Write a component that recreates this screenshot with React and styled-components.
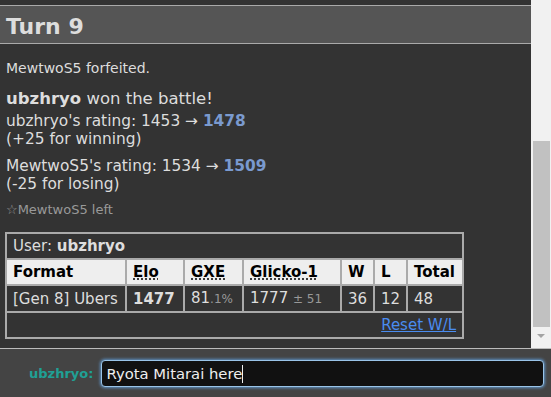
import React, { useEffect, useRef } from 'react';
import styled, { createGlobalStyle } from 'styled-components';

const GlobalStyle = createGlobalStyle`
  html, body {
    margin: 0;
    padding: 0;
    width: 100%;
    height: 100%;
    overflow: hidden;
    background: #333;
  }
  #root {
    height: 100%;
  }
`;

const Page = styled.div`
  display: flex;
  flex-direction: column;
  height: 100vh;
  font-family: "DejaVu Sans", Verdana, sans-serif;
  color: #ddd;
`;

const Main = styled.div`
  display: flex;
  height: 348px;
  flex: 0 0 348px;
`;

const Log = styled.div`
  flex: 1;
  background: #333;
  padding-top: 5px;
  overflow: hidden;
`;

const TurnHeader = styled.h2`
  margin: 0;
  padding: 8px 6px 4px;
  background: #555;
  border-top: 1px solid #aaa;
  border-bottom: 1px solid #aaa;
  font-size: 22px;
  line-height: 25px;
  font-weight: bold;
  color: #ddd;
`;

const Body = styled.div`
  padding: 0 6px;
`;

const Line = styled.div`
  margin-top: ${(p) => p.$gap || 0}px;
  font-size: ${(p) => p.$size || 15.4}px;
  line-height: ${(p) => p.$lh || 17.5}px;
  color: ${(p) => p.$color || '#ddd'};
`;

const Rating = styled.strong`
  color: #7a9acf;
`;

const RatingsTable = styled.table`
  margin: 14px 0 0 -1px;
  width: 459px;
  border-collapse: collapse;
  table-layout: fixed;
  font-size: 15px;
  line-height: 18px;
  color: #ddd;

  td, th {
    border: 2px solid #aaa;
    padding: 3px 6px 3px;
    text-align: left;
    white-space: nowrap;
    overflow: hidden;
  }
`;

const HeadCell = styled.th`
  background: #eee;
  color: #000;
  font-weight: bold;
`;

const Abbr = styled.abbr`
  text-decoration: underline dotted;
  text-underline-offset: 2px;
  cursor: help;
`;

const Small = styled.small`
  font-size: 12px;
  color: #999;
`;

const ResetCell = styled.td`
  text-align: right !important;
`;

const ResetLink = styled.a`
  color: #4a8cf0;
  text-decoration: underline;
  cursor: pointer;
`;

const Scrollbar = styled.div`
  width: 20px;
  flex: 0 0 20px;
  background: #f1f1f1;
  display: flex;
  flex-direction: column;
  align-items: center;
`;

const Thumb = styled.div`
  margin: 141px 1px 0 2px;
  align-self: stretch;
  height: 186px;
  background: #c1c1c1;
`;

const DownArrow = styled.div`
  margin-top: 7px;
  width: 0;
  height: 0;
  border-left: 4px solid transparent;
  border-right: 4px solid transparent;
  border-top: 4px solid #a3a3a3;
`;

const ChatBar = styled.form`
  flex: 1;
  display: flex;
  align-items: center;
  gap: 8px;
  padding: 0 7px 0 29px;
  background: #444;
  border-top: 1px solid #bbb;
`;

const Name = styled.label`
  font-size: 13px;
  font-weight: bold;
  color: #1fa095;
`;

const InputWrap = styled.div`
  flex: 1;
  position: relative;
  display: flex;
`;

const ChatInput = styled.input`
  flex: 1;
  height: 27px;
  box-sizing: border-box;
  padding: 0 4px;
  background: #111;
  color: #eee;
  caret-color: transparent;
  border: 1px solid #9ac4e8;
  border-radius: 4px;
  box-shadow: 0 0 3px 1px #5c8fc0;
  outline: none;
  font-family: "DejaVu Sans", Verdana, sans-serif;
  font-size: 14.8px;
`;

/* visible text caret drawn over the field, after the typed text */
const Caret = styled.span`
  position: absolute;
  top: 5px;
  left: 141px;
  width: 1px;
  height: 18px;
  background: #eee;
  pointer-events: none;
`;

const cols = [120, 58, 59, 98, 33, 33, 56];

const App = () => {
  const inputRef = useRef(null);

  useEffect(() => {
    const el = inputRef.current;
    if (el) {
      el.focus();
      el.setSelectionRange(el.value.length, el.value.length);
    }
  }, []);

  return (
    <Page>
      <GlobalStyle />
      <Main>
        <Log>
          <TurnHeader>Turn 9</TurnHeader>
          <Body>
            <Line $gap={16} $size={14} $lh={17}>MewtwoS5 forfeited.</Line>
            <Line $gap={13} $size={16.5} $lh={18}>
              <strong>ubzhryo</strong> won the battle!
            </Line>
            <Line $gap={5}>
              ubzhryo's rating: 1453 &rarr; <Rating>1478</Rating>
              <br />
              (+25 for winning)
            </Line>
            <Line $gap={10}>
              MewtwoS5's rating: 1534 &rarr; <Rating>1509</Rating>
              <br />
              (-25 for losing)
            </Line>
            <Line $gap={9} $size={13} $lh={16} $color="#999">
              ☆MewtwoS5 left
            </Line>
            <RatingsTable>
              <colgroup>
                {cols.map((w, i) => (
                  <col key={i} style={{ width: w }} />
                ))}
              </colgroup>
              <tbody>
                <tr>
                  <td colSpan={7}>
                    User: <strong>ubzhryo</strong>
                  </td>
                </tr>
                <tr>
                  <HeadCell>Format</HeadCell>
                  <HeadCell><Abbr title="Elo rating">Elo</Abbr></HeadCell>
                  <HeadCell><Abbr title="user's percentage chance of winning a random battle">GXE</Abbr></HeadCell>
                  <HeadCell><Abbr title="Glicko-1 rating">Glicko-1</Abbr></HeadCell>
                  <HeadCell>W</HeadCell>
                  <HeadCell>L</HeadCell>
                  <HeadCell>Total</HeadCell>
                </tr>
                <tr>
                  <td>[Gen 8] Ubers</td>
                  <td><strong>1477</strong></td>
                  <td>81<Small>.1%</Small></td>
                  <td>1777 <Small>± 51</Small></td>
                  <td>36</td>
                  <td>12</td>
                  <td>48</td>
                </tr>
                <tr>
                  <ResetCell colSpan={7}>
                    <ResetLink>Reset W/L</ResetLink>
                  </ResetCell>
                </tr>
              </tbody>
            </RatingsTable>
          </Body>
        </Log>
        <Scrollbar>
          <Thumb />
          <DownArrow />
        </Scrollbar>
      </Main>
      <ChatBar onSubmit={(e) => e.preventDefault()}>
        <Name htmlFor="chat">ubzhryo:</Name>
        <InputWrap>
          <ChatInput id="chat" ref={inputRef} defaultValue="Ryota Mitarai here" />
          <Caret />
        </InputWrap>
      </ChatBar>
    </Page>
  );
};

export default App;
